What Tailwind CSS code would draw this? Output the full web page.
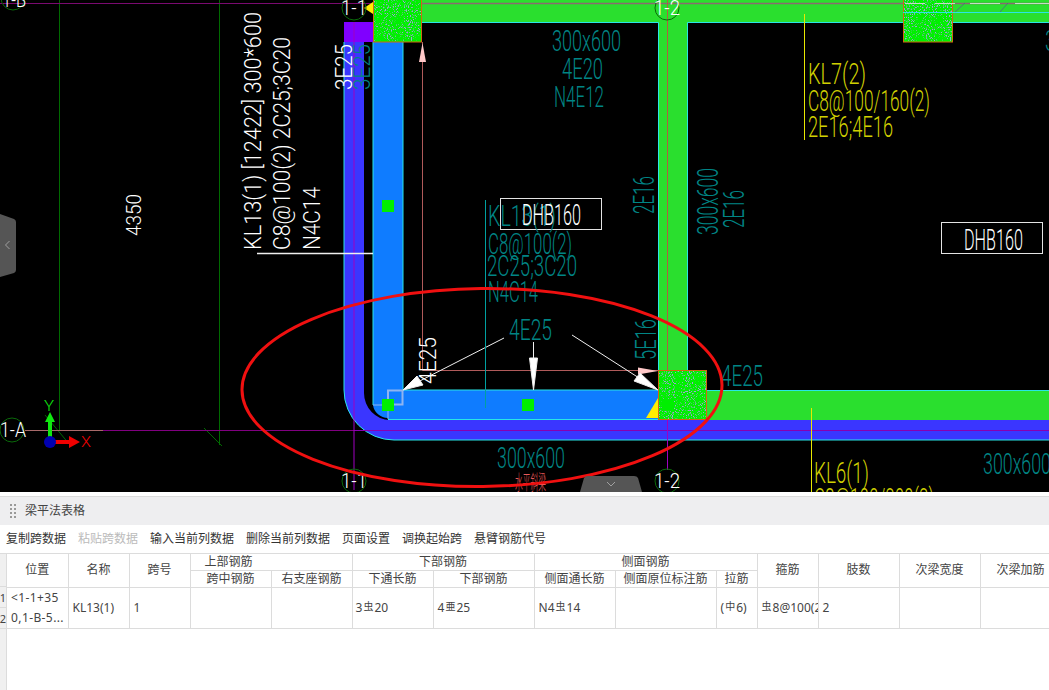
<!DOCTYPE html>
<html lang="en">
<head>
    <meta charset="UTF-8">
    <meta name="viewport" content="width=device-width, initial-scale=1.0">
    <title>梁平法表格</title>
    <script src="https://cdn.jsdelivr.net/npm/@tailwindcss/browser@4"></script>
</head>
<body class="bg-white overflow-hidden">
<div class="w-[1049px] h-[690px] flex flex-col overflow-hidden font-['Noto_Sans','Noto_Sans_CJK_SC',sans-serif] text-xs text-[#444]">

    <!-- drawing area -->
    <div class="relative h-[492px] shrink-0 bg-black overflow-hidden">
        <svg width="1049" height="492" viewBox="0 0 1049 492" class="block font-['Roboto','Liberation_Sans',sans-serif] font-light">
            <defs>
                <filter id="noise" x="0" y="0" width="100%" height="100%">
                    <feTurbulence type="fractalNoise" baseFrequency="0.95" numOctaves="2" seed="4"/>
                    <feColorMatrix values="0 0 0 0 0.35  0 0 0 0 0.35  0 0 0 0 0.7  7 0 0 0 -3.9"/>
                </filter>
            </defs>

            <!-- grid lines -->
            <path d="M59.5 0V430M219.5 0V445M45 415L70 445M204 428L222 446" fill="none" stroke="#006a00"/>
            <path d="M25 430.5H103" stroke="#a86a6a"/>
            <path d="M103 430.5H354" stroke="#800080"/>
            <path d="M0 3.5H422" stroke="#7a0a70"/>

            <!-- green beams -->
            <path d="M422 0H1049V22H688V370H658V22H422Z" fill="#2adf2e"/>
            <path d="M707 391H1049V420H707Z" fill="#2adf2e"/>
            <path d="M422 22.5H658.5V370M687.5 370V22.5H1049M707 390.5H1049" fill="none" stroke="#28e6e6"/>
            <path d="M422 3.5H1049" stroke="#8a6a70" stroke-width="1.5"/>

            <!-- blue beams -->
            <path d="M344 42V390A50 50 0 0 0 394 440H1049V420H390A26 27 0 0 1 364 393V42Z" fill="#3a36ff"/>
            <path d="M344 42V390A50 50 0 0 0 394 440H1049" fill="none" stroke="#28e6e6"/>
            <path d="M344 22H373V42H344Z" fill="#8000ff"/>
            <path d="M373 42H403V390H658V420H388V418A15 15 0 0 1 373 405Z" fill="#0f7cff"/>
            <path d="M373 405V42M403 42V390H658M388 419.5H658" fill="none" stroke="#28e6e6"/>
            <path d="M388 390.5H402.5V404.5H388Z" fill="none" stroke="#8fb4f0" stroke-width="2"/>
            <path d="M373 405H388V419" fill="none" stroke="#8fb4f0"/>
            <path d="M354 430.5H1049" stroke="#8a00b0"/>
            <path d="M354 22V490M667.5 420V470" stroke="#a000c0"/>
            <path d="M667.5 0V370" stroke="#b06040"/>

            <!-- columns -->
            <path d="M658 418L646 418L658 398Z" fill="#ffee00"/>
            <path d="M364 8L373 2V14Z" fill="#ffee00"/>
            <g stroke="#cf6a10">
                <rect x="373.5" y="-1" width="48" height="43" fill="#00f000"/>
                <rect x="903.5" y="-1" width="49" height="43" fill="#00f000"/>
                <rect x="658.5" y="370.5" width="48" height="49" fill="#00f000"/>
            </g>
            <rect x="374" y="0" width="47" height="41" filter="url(#noise)"/>
            <rect x="904" y="0" width="48" height="41" filter="url(#noise)"/>
            <rect x="659" y="371" width="47" height="48" filter="url(#noise)"/>
            <path d="M903 12.5H1049" stroke="#28e6e6"/>
            <path d="M905 3.5H925M935 3.5H955M970 3.5H1000M1015 3.5H1049" stroke="#c8d8c8"/>
            <path d="M955 12L965 3M1000 12L1008 3" stroke="#4a7a7a"/>

            <!-- green markers -->
            <g fill="#00ef00">
                <rect x="382" y="200" width="12" height="12"/>
                <rect x="382" y="399" width="12" height="12"/>
                <rect x="522" y="399" width="12" height="12"/>
                <rect x="662" y="399" width="12" height="12"/>
            </g>

            <!-- dimension arrows -->
            <path d="M422.5 42V370.5H658" fill="none" stroke="#b05a5a"/>
            <path d="M422.5 43L419 62H426Z" fill="#ffc8c8"/>
            <path d="M658 371L638 367.5V374.5Z" fill="#ffc8c8"/>

            <!-- leaders -->
            <g stroke="#f0f0f0" fill="#fff">
                <path d="M257 253.5H373" stroke-width="1.5"/>
                <path d="M504 338L410 386M533.5 342V378M572 335L650 385" fill="none"/>
                <path d="M403 390L417 376L423 385Z"/>
                <path d="M533.5 390L529.5 358H537.5Z"/>
                <path d="M658 390L640 373L634 381Z"/>
            </g>
            <path d="M485.5 200V408" stroke="#00a0a0"/>
            <path d="M804.5 14V140M811.5 408V492" stroke="#e8e800"/>

            <!-- DHB boxes -->
            <g fill="none" stroke="#e4e4e4">
                <rect x="500.5" y="198.5" width="101" height="31"/>
                <rect x="941.5" y="222.5" width="101" height="31"/>
            </g>

            <!-- teal annotations -->
            <g fill="#008585" font-size="29">
                <text x="552" y="51" textLength="69" lengthAdjust="spacingAndGlyphs">300x600</text>
                <text x="562" y="79" textLength="41" lengthAdjust="spacingAndGlyphs">4E20</text>
                <text x="554" y="107" textLength="50" lengthAdjust="spacingAndGlyphs">N4E12</text>
                <text x="488" y="226" textLength="68" lengthAdjust="spacingAndGlyphs">KL13(1)</text>
                <text x="488" y="254" textLength="84" lengthAdjust="spacingAndGlyphs">C8@100(2)</text>
                <text x="487" y="276" textLength="90" lengthAdjust="spacingAndGlyphs">2C25;3C20</text>
                <text x="488" y="302" textLength="50" lengthAdjust="spacingAndGlyphs">N4C14</text>
                <text x="509" y="340" textLength="43" lengthAdjust="spacingAndGlyphs">4E25</text>
                <text x="721" y="386" textLength="42" lengthAdjust="spacingAndGlyphs">4E25</text>
                <text x="497" y="468" textLength="68" lengthAdjust="spacingAndGlyphs">300x600</text>
                <text x="983" y="474" textLength="68" lengthAdjust="spacingAndGlyphs">300x600</text>
                <text x="1045" y="51" textLength="11" lengthAdjust="spacingAndGlyphs">3</text>
                <text transform="translate(654 214) rotate(-90)" textLength="38" lengthAdjust="spacingAndGlyphs">2E16</text>
                <text transform="translate(718 235) rotate(-90)" textLength="67" lengthAdjust="spacingAndGlyphs">300x600</text>
                <text transform="translate(744 228) rotate(-90)" textLength="38" lengthAdjust="spacingAndGlyphs">2E16</text>
                <text transform="translate(656 360) rotate(-90)" textLength="41" lengthAdjust="spacingAndGlyphs">5E16</text>
                <text transform="translate(370 90) rotate(-90)" font-size="23" textLength="46" lengthAdjust="spacingAndGlyphs">3E25</text>
            </g>

            <!-- yellow annotations -->
            <g fill="#d0d000" font-size="29">
                <text x="808" y="84" textLength="58" lengthAdjust="spacingAndGlyphs">KL7(2)</text>
                <text x="808" y="111" textLength="122" lengthAdjust="spacingAndGlyphs">C8@100/160(2)</text>
                <text x="808" y="137" textLength="85" lengthAdjust="spacingAndGlyphs">2E16;4E16</text>
                <text x="814" y="483" textLength="55" lengthAdjust="spacingAndGlyphs">KL6(1)</text>
                <text x="814" y="509" textLength="120" lengthAdjust="spacingAndGlyphs">C8@100/200(2)</text>
            </g>

            <!-- white annotations -->
            <g fill="#fff" font-size="24">
                <text x="522" y="225" font-size="29" textLength="59" lengthAdjust="spacingAndGlyphs">DHB160</text>
                <text x="964" y="250" font-size="29" textLength="59" lengthAdjust="spacingAndGlyphs">DHB160</text>
                <text transform="translate(261 250) rotate(-90)" textLength="238" lengthAdjust="spacingAndGlyphs">KL13(1) [12422] 300*600</text>
                <text transform="translate(290 250) rotate(-90)" textLength="213" lengthAdjust="spacingAndGlyphs">C8@100(2) 2C25;3C20</text>
                <text transform="translate(320 250) rotate(-90)" textLength="63" lengthAdjust="spacingAndGlyphs">N4C14</text>
                <text transform="translate(141 236) rotate(-90)" font-size="21" textLength="42" lengthAdjust="spacingAndGlyphs">4350</text>
                <text transform="translate(352 90) rotate(-90)" font-size="23" textLength="46" lengthAdjust="spacingAndGlyphs">3E25</text>
                <text transform="translate(436 384) rotate(-90)" textLength="47" lengthAdjust="spacingAndGlyphs">4E25</text>
            </g>

            <!-- axis bubbles -->
            <g fill="none" stroke="#0a6a0a">
                <circle cx="354" cy="8" r="12"/>
                <circle cx="667" cy="8" r="12"/>
                <circle cx="354" cy="481" r="12"/>
                <circle cx="667" cy="481" r="12"/>
                <circle cx="12" cy="430" r="12"/>
                <circle cx="13" cy="-2" r="12"/>
            </g>
            <g fill="#fff" font-size="20">
                <text x="341" y="15" textLength="26" lengthAdjust="spacingAndGlyphs">1-1</text>
                <text x="654" y="15" textLength="26" lengthAdjust="spacingAndGlyphs">1-2</text>
                <text x="341" y="488" textLength="26" lengthAdjust="spacingAndGlyphs">1-1</text>
                <text x="654" y="488" textLength="26" lengthAdjust="spacingAndGlyphs">1-2</text>
                <text x="0" y="437" textLength="26" lengthAdjust="spacingAndGlyphs">1-A</text>
                <text x="2" y="7" textLength="24" lengthAdjust="spacingAndGlyphs">1-B</text>
            </g>

            <!-- pink note -->
            <text x="515" y="490" font-size="20" fill="#e85a5a" textLength="31" lengthAdjust="spacingAndGlyphs" class="font-['Noto_Sans_CJK_SC',sans-serif]">水平斜梁</text>

            <!-- red ellipse -->
            <ellipse cx="482" cy="387.5" rx="240" ry="99" fill="none" stroke="#f01010" stroke-width="3" transform="rotate(-0.6 482 387.5)"/>

            <!-- UCS icon -->
            <path d="M48 441V422H45L50 412L55 422H52V441Z" fill="#10e810"/>
            <path d="M50 440H69V436L80 442L69 448V444H50Z" fill="#f00000"/>
            <circle cx="50" cy="442" r="6" fill="#0000b0"/>
            <text x="44" y="411" font-size="14" fill="#10e810" textLength="10" lengthAdjust="spacingAndGlyphs">Y</text>
            <text x="81" y="447" font-size="14" fill="#f00000" textLength="10" lengthAdjust="spacingAndGlyphs">X</text>
        </svg>

        <!-- collapse handles -->
        <svg width="16" height="64" viewBox="0 0 16 64" class="absolute left-0 top-[214px]">
            <path d="M0 0L14 5Q16 6 16 8V56Q16 58 14 59L0 63Z" fill="#555"/>
            <path d="M9.5 27L5.5 31L9.5 35" fill="none" stroke="#a0a0a0"/>
        </svg>
        <svg width="62" height="16" viewBox="0 0 62 16" class="absolute left-[580px] top-[476px]">
            <path d="M0 16L4 2Q5 0 8 0H54Q57 0 58 2L62 16Z" fill="#555"/>
            <path d="M27 6L31 10L35 6" fill="none" stroke="#a0a0a0"/>
        </svg>
    </div>

    <!-- property panel -->
    <div class="h-1 shrink-0 bg-white"></div>
    <div class="flex-1 flex flex-col border-t border-[#dcdcdc] min-h-0">
        <div class="h-[28px] shrink-0 flex items-center gap-[9px] pl-[10px] bg-[#eeeef0]">
            <svg width="6" height="14" viewBox="0 0 6 14" class="block">
                <g fill="#999">
                    <rect x="0" y="0" width="2" height="2"/><rect x="4" y="0" width="2" height="2"/>
                    <rect x="0" y="4" width="2" height="2"/><rect x="4" y="4" width="2" height="2"/>
                    <rect x="0" y="8" width="2" height="2"/><rect x="4" y="8" width="2" height="2"/>
                    <rect x="0" y="12" width="2" height="2"/><rect x="4" y="12" width="2" height="2"/>
                </g>
            </svg>
            <span>梁平法表格</span>
        </div>
        <div class="h-[28px] shrink-0 flex items-center gap-3 pl-[6px] whitespace-nowrap text-[#333]">
            <span>复制跨数据</span>
            <span class="text-[#bbb]">粘贴跨数据</span>
            <span>输入当前列数据</span>
            <span>删除当前列数据</span>
            <span>页面设置</span>
            <span>调换起始跨</span>
            <span>悬臂钢筋代号</span>
        </div>
        <div class="flex-1 flex min-h-0 overflow-hidden border-t border-[#dcdcdc]">
            <div class="w-[7px] shrink-0 bg-[#f0f0f0] border-r border-[#dcdcdc] flex flex-col text-[11px] leading-none">
                <div class="h-[33px] border-b border-[#dcdcdc]"></div>
                <div class="h-[21px] border-b border-[#dcdcdc] flex items-center justify-center">1</div>
                <div class="h-[21px] border-b border-[#dcdcdc] flex items-center justify-center">2</div>
            </div>
            <table class="table-fixed border-collapse w-[1054px] shrink-0 text-center self-start leading-none">
                <colgroup>
                    <col class="w-[61px]"><col class="w-[61px]"><col class="w-[61px]"><col class="w-[81px]"><col class="w-[81px]">
                    <col class="w-[81px]"><col class="w-[101px]"><col class="w-[81px]"><col class="w-[101px]"><col class="w-[41px]">
                    <col class="w-[61px]"><col class="w-[81px]"><col class="w-[81px]"><col class="w-[81px]">
                </colgroup>
                <thead>
                    <tr class="h-[16px]">
                        <th rowspan="2" class="font-normal border-r border-b border-[#dcdcdc]">位置</th>
                        <th rowspan="2" class="font-normal border-r border-b border-[#dcdcdc]">名称</th>
                        <th rowspan="2" class="font-normal border-r border-b border-[#dcdcdc]">跨号</th>
                        <th colspan="2" class="font-normal border-r border-b border-[#dcdcdc] text-left pl-[14px]">上部钢筋</th>
                        <th colspan="2" class="font-normal border-r border-b border-[#dcdcdc]">下部钢筋</th>
                        <th colspan="3" class="font-normal border-r border-b border-[#dcdcdc]">侧面钢筋</th>
                        <th rowspan="2" class="font-normal border-r border-b border-[#dcdcdc]">箍筋</th>
                        <th rowspan="2" class="font-normal border-r border-b border-[#dcdcdc]">肢数</th>
                        <th rowspan="2" class="font-normal border-r border-b border-[#dcdcdc]">次梁宽度</th>
                        <th rowspan="2" class="font-normal border-r border-b border-[#dcdcdc]">次梁加筋</th>
                    </tr>
                    <tr class="h-[17px]">
                        <th class="font-normal border-r border-b border-[#dcdcdc]">跨中钢筋</th>
                        <th class="font-normal border-r border-b border-[#dcdcdc]">右支座钢筋</th>
                        <th class="font-normal border-r border-b border-[#dcdcdc]">下通长筋</th>
                        <th class="font-normal border-r border-b border-[#dcdcdc]">下部钢筋</th>
                        <th class="font-normal border-r border-b border-[#dcdcdc]">侧面通长筋</th>
                        <th class="font-normal border-r border-b border-[#dcdcdc]">侧面原位标注筋</th>
                        <th class="font-normal border-r border-b border-[#dcdcdc]">拉筋</th>
                    </tr>
                </thead>
                <tbody class="text-left">
                    <tr class="h-[41px]">
                        <td class="border-r border-b border-[#dcdcdc] pl-[4px] leading-[20px] tracking-[0.4px]">&lt;1-1+35<br>0,1-B-5...</td>
                        <td class="border-r border-b border-[#dcdcdc] pl-[4px]">KL13(1)</td>
                        <td class="border-r border-b border-[#dcdcdc] pl-[4px]">1</td>
                        <td class="border-r border-b border-[#dcdcdc]"></td>
                        <td class="border-r border-b border-[#dcdcdc]"></td>
                        <td class="border-r border-b border-[#dcdcdc] pl-[3px]">3<span class="text-[10px] relative -top-[2px] mx-px">虫</span>20</td>
                        <td class="border-r border-b border-[#dcdcdc] pl-[4px]">4<span class="text-[10px] relative -top-[2px] mx-px">亜</span>25</td>
                        <td class="border-r border-b border-[#dcdcdc] pl-[4px]">N4<span class="text-[10px] relative -top-[2px] mx-px">虫</span>14</td>
                        <td class="border-r border-b border-[#dcdcdc]"></td>
                        <td class="border-r border-b border-[#dcdcdc] pl-[4px]">(<span class="text-[10px] relative -top-[2px] mx-px">中</span>6)</td>
                        <td class="border-r border-b border-[#dcdcdc] pl-[4px] whitespace-nowrap overflow-hidden"><span class="text-[10px] relative -top-[2px] mr-px">虫</span>8@100(2)</td>
                        <td class="border-r border-b border-[#dcdcdc] pl-[4px]">2</td>
                        <td class="border-r border-b border-[#dcdcdc]"></td>
                        <td class="border-r border-b border-[#dcdcdc]"></td>
                    </tr>
                </tbody>
            </table>
        </div>
    </div>
</div>
</body>
</html>
